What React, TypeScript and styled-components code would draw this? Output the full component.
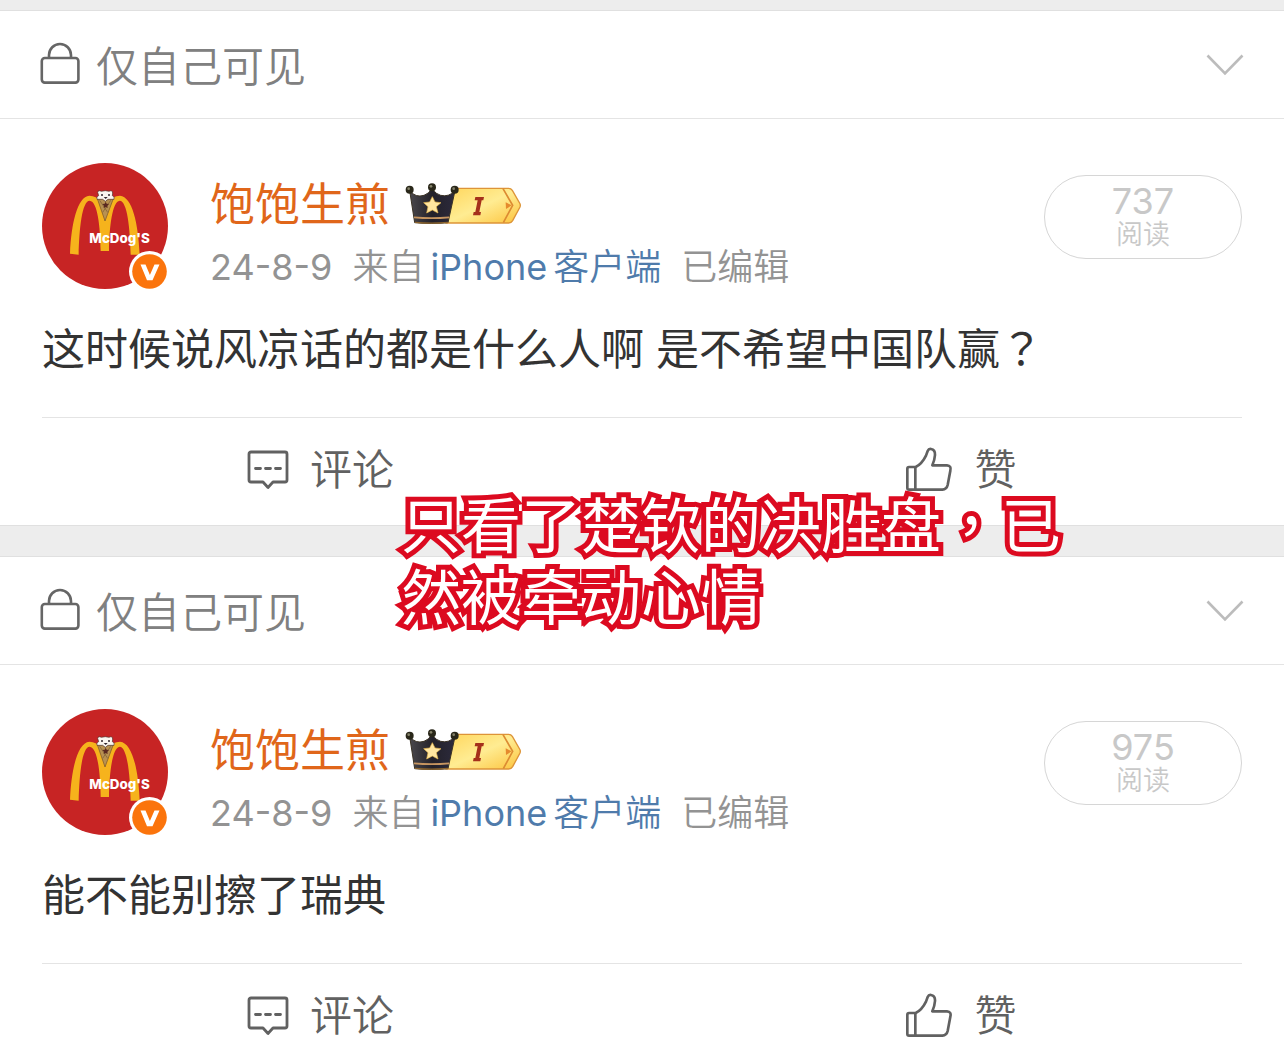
import React from "react";
import styled, { createGlobalStyle } from "styled-components";

const GlobalStyle = createGlobalStyle`
  *, *::before, *::after { box-sizing: border-box; }
  body {
    margin: 0;
    background: #fff;
    font-family: Inter, "Noto Sans CJK SC", sans-serif;
    color: #333;
  }
  button { font: inherit; color: inherit; background: none; border: 0; padding: 0; cursor: pointer; }
  svg { display: block; flex: none; }
`;

const Page = styled.main`
  position: relative;
  display: flex;
  flex-direction: column;
  gap: 30px;
  padding-top: 10px;
  background: #ededed;
`;

const Card = styled.article`
  background: #fff;
  border-top: 1px solid #e0e0e0;
  border-bottom: 1px solid #e0e0e0;

  &:last-of-type { border-bottom: 0; }
`;

const Visibility = styled.header`
  display: flex;
  align-items: center;
  justify-content: space-between;
  height: 108px;
  padding: 0 40px;
  border-bottom: 1px solid #e4e4e4;
`;

const VisibilityLabel = styled.div`
  display: flex;
  align-items: center;
  gap: 16px;
  padding-top: 4px;
  font-size: 42px;
  line-height: 60px;
  font-weight: 350;
  color: #808080;

  svg { margin-bottom: 8px; }
`;

const Content = styled.div`
  margin: 0 42px;
  padding: 44px 0 36px;
  border-bottom: 1px solid #e4e4e4;
`;

const Author = styled.div`
  display: flex;
  align-items: flex-start;
`;

const AvatarBox = styled.div`
  position: relative;
  width: 126px;
  height: 126px;
  margin-right: 42px;
`;

const Verified = styled.svg`
  position: absolute;
  right: -2px;
  bottom: -3px;
`;

const Info = styled.div`
  flex: 1;
  padding-top: 12px;
`;

const NameRow = styled.div`
  display: flex;
  align-items: center;
  gap: 14px;

  svg { margin-bottom: 4px; }
`;

const Name = styled.h2`
  margin: 0;
  font-size: 45px;
  line-height: 60px;
  font-weight: 400;
  color: #e0661a;
`;

const Meta = styled.div`
  display: flex;
  gap: 20px;
  font-size: 36px;
  line-height: 64px;
  font-weight: 350;
  color: #939393;
`;

const PostDate = styled.time`
  font-weight: 400;
`;

const Source = styled.span`
  display: flex;
  gap: 6px;
`;

const Client = styled.a`
  display: flex;
  gap: 6px;
  color: #4f7bab;
  text-decoration: none;
`;

const Device = styled.span`
  font-weight: 400;
`;

const Reads = styled.button`
  display: flex;
  flex-direction: column;
  align-items: center;
  width: 198px;
  height: 84px;
  margin-top: 12px;
  padding-top: 6px;
  border: 1px solid #d6d6d6;
  border-radius: 42px;
  color: #c8c8c8;
  font-weight: 350;
`;

const ReadCount = styled.span`
  font-size: 36px;
  line-height: 38px;
  font-weight: 400;
`;

const ReadLabel = styled.span`
  font-size: 27px;
  line-height: 30px;
`;

const PostText = styled.p`
  margin: 19px 0 0;
  font-size: 43px;
  line-height: 63px;
`;

const FullWidthMark = styled.span`
  font-family: "Noto Sans CJK TC", sans-serif;
  line-height: 1;
`;

const Actions = styled.footer<{ $compact: boolean }>`
  display: grid;
  grid-template-columns: 1fr 1fr;
  padding: 20px 2px ${(p) => (p.$compact ? 3 : 23)}px 0;
`;

const Action = styled.button`
  display: flex;
  align-items: center;
  justify-content: center;
  gap: 21px;
  font-size: 42px;
  line-height: 64px;
  font-weight: 350;
  color: #616161;
`;

const Caption = styled.p`
  position: absolute;
  top: 486px;
  left: 401px;
  margin: 0;
  font-family: "Noto Sans CJK TC", sans-serif;
  font-size: 60px;
  line-height: 72px;
  font-weight: 400;
  color: #fff;
  -webkit-text-stroke: 10px #dc0a20;
  paint-order: stroke fill;
  pointer-events: none;
`;

const LockIcon = () => (
  <svg width="40" height="42" viewBox="0 0 40 42" fill="none" stroke="#666" strokeWidth="2.6">
    <rect x="1.8" y="16" width="36.6" height="24.6" rx="3" />
    <path d="M9 16v-3a11 11 0 0 1 22 0v3" />
  </svg>
);

const ChevronIcon = () => (
  <svg width="38" height="22" viewBox="0 0 38 22" fill="none" stroke="#bcbcbc" strokeWidth="2.6">
    <path d="M1.5 1.5 19 19.5 36.5 1.5" />
  </svg>
);

const CommentIcon = () => (
  <svg width="42" height="40" viewBox="0 0 42 40" fill="none" stroke="#616161" strokeWidth="2.8" strokeLinejoin="round">
    <path d="M4 2H38a2 2 0 0 1 2 2V30a2 2 0 0 1-2 2H26l-5 5.500-5-5.500H4a2 2 0 0 1-2-2V4a2 2 0 0 1 2-2Z" />
    <path d="M8.500 18.500h5M18.500 18.500h5M28.500 18.500h5" strokeLinecap="round" />
  </svg>
);

const LikeIcon = () => (
  <svg width="47" height="46" viewBox="51 48 141 138" fill="none" stroke="#616161" strokeWidth="8" strokeLinejoin="round">
    <path d="M60 108H80Q98 100 111 74L116 60Q119 53 126 54Q139 56 138 72Q137 87 130 103H174Q188 104 184 119L176 162Q173 175 160 176H60Q55 176 55 171V113Q55 108 60 108Z" />
    <path d="M79 109V176" />
  </svg>
);

const AvatarPicture = () => (
  <svg width="126" height="126" viewBox="36 39 378 378" role="img" aria-label="McDog'S">
    <circle cx="225" cy="228" r="189" fill="#c72424" />
    <path d="M120 311C124 220 142 140 178 137C207 137 222 162 225 192C228 162 240 137 270 137C307 140 325 220 329 314H302C300 235 292 153 269 152C247 154 238 230 237 303H212C211 230 203 154 179 152C156 153 148 235 146 314Z" fill="#f6b31c" />
    <path d="M202 146H250L225 213Z" fill="#b89151" stroke="#765227" strokeWidth="2" />
    <path d="M209 151 233 187M242 151 218 187" stroke="#795b35" strokeWidth="2" />
    <path d="M203 127Q205 119 214 124Q226 120 237 124Q247 119 248 129L247 137Q255 140 252 148H234L226 154 218 148H201Q198 140 206 137Z" fill="#faf5ef" stroke="#4b3029" strokeWidth="2" />
    <circle cx="216" cy="135" r="3" fill="#30242c" />
    <circle cx="237" cy="135" r="3" fill="#30242c" />
    <path d="M221 141h12l-6 6Z" fill="#30242c" />
    <path d="m227 155 3 6 7 1-5 5 1 7-6-3-6 3 1-7-5-5 7-1Z" fill="#5a2921" />
    <text x="178" y="278" fill="#fff" fontFamily="Inter, sans-serif" fontSize="40" fontWeight="800">McDog'S</text>
  </svg>
);

const VerifiedIcon = () => (
  <Verified width="41" height="41" viewBox="0 0 41 41" role="img" aria-label="V">
    <circle cx="20.5" cy="20.5" r="20.5" fill="#fff" />
    <circle cx="20.5" cy="20.5" r="17.3" fill="#fb740c" />
    <path d="M11.500 13.500H16.500L20.900 24 25.500 13.500H30.500L23.500 29.200H18Z" fill="#fff" />
  </Verified>
);

const CrownBadge = ({ id }: { id: string }) => (
  <svg width="118" height="44" viewBox="612 48 354 132" role="img" aria-label="I">
    <defs>
      <linearGradient id={`${id}-gold`} x1="0" y1="0" x2="1" y2="1">
        <stop offset="0" stopColor="#ffd65c" />
        <stop offset=".5" stopColor="#ffec92" />
        <stop offset="1" stopColor="#fcc33c" />
      </linearGradient>
      <linearGradient id={`${id}-dark`} x1="0" y1="0" x2="1" y2="0">
        <stop offset="0" stopColor="#4a484c" />
        <stop offset=".5" stopColor="#232129" />
        <stop offset="1" stopColor="#2c2a3c" />
      </linearGradient>
    </defs>
    <path d="M768 70H926Q933 70 937 76L960 116Q962 121 960 126L938 167Q934 174 926 174H738L742 110Z" fill={`url(#${id}-gold)`} stroke="#dd9438" strokeWidth="4" />
    <path d="M909 71 938 121 910 173" fill="none" stroke="#dc8b32" strokeWidth="5" />
    <path d="M917 112 935 121 918 132Z" fill="#e58a2d" />
    <path d="M826 96H852L850 106H845L838 141H843L841 151H819L821 141H826L833 106H824Z" fill="#a5301b" />
    <path d="M629 77Q647 99 672 91Q686 87 696 70Q707 88 722 91Q747 97 765 77L744 173Q694 178 644 173Z" fill={`url(#${id}-dark)`} stroke="#3a3225" strokeWidth="3" />
    <path d="M642 157Q694 162 748 157" fill="none" stroke="#c69560" strokeWidth="5" />
    <path d="M645 172Q694 177 744 172" fill="none" stroke="#8c642d" strokeWidth="4" />
    {[[629, 74], [696, 67], [764, 74]].map(([cx, cy]) => (
      <g key={cx}>
        <circle cx={cx} cy={cy} r="12" fill="#292719" />
        <circle cx={cx - 3} cy={cy - 3} r="4" fill="#85836a" />
      </g>
    ))}
    <path d="m697 95 8 16 18 2-14 12 5 19-17-9-17 9 4-19-13-12 18-2Z" fill="#ffe6a0" stroke="#e7b850" strokeWidth="2" />
  </svg>
);

interface Post {
  id: string;
  text: string;
  mark?: string;
  reads: number;
}

const posts: Post[] = [
  { id: "first", text: "这时候说风凉话的都是什么人啊 是不希望中国队赢", mark: "？", reads: 737 },
  { id: "second", text: "能不能别擦了瑞典", reads: 975 },
];

const PostCard = ({ post, last }: { post: Post; last: boolean }) => (
  <Card>
    <Visibility>
      <VisibilityLabel>
        <LockIcon />
        <span>仅自己可见</span>
      </VisibilityLabel>
      <button type="button" aria-label="更多">
        <ChevronIcon />
      </button>
    </Visibility>
    <Content>
      <Author>
        <AvatarBox>
          <AvatarPicture />
          <VerifiedIcon />
        </AvatarBox>
        <Info>
          <NameRow>
            <Name>饱饱生煎</Name>
            <CrownBadge id={post.id} />
          </NameRow>
          <Meta>
            <PostDate dateTime="2024-08-09">24-8-9</PostDate>
            <Source>
              <span>来自</span>
              <Client href="#client">
                <Device>iPhone</Device>
                <span>客户端</span>
              </Client>
            </Source>
            <span>已编辑</span>
          </Meta>
        </Info>
        <Reads type="button">
          <ReadCount>{post.reads}</ReadCount>
          <ReadLabel>阅读</ReadLabel>
        </Reads>
      </Author>
      <PostText>
        {post.text}
        {post.mark && <FullWidthMark>{post.mark}</FullWidthMark>}
      </PostText>
    </Content>
    <Actions $compact={last}>
      <Action type="button">
        <CommentIcon />
        <span>评论</span>
      </Action>
      <Action type="button">
        <LikeIcon />
        <span>赞</span>
      </Action>
    </Actions>
  </Card>
);

export default function App() {
  return (
    <>
      <GlobalStyle />
      <Page>
        {posts.map((post, index) => (
          <PostCard key={post.id} post={post} last={index === posts.length - 1} />
        ))}
        <Caption>
          只看了楚钦的决胜盘，已
          <br />
          然被牵动心情
        </Caption>
      </Page>
    </>
  );
}
